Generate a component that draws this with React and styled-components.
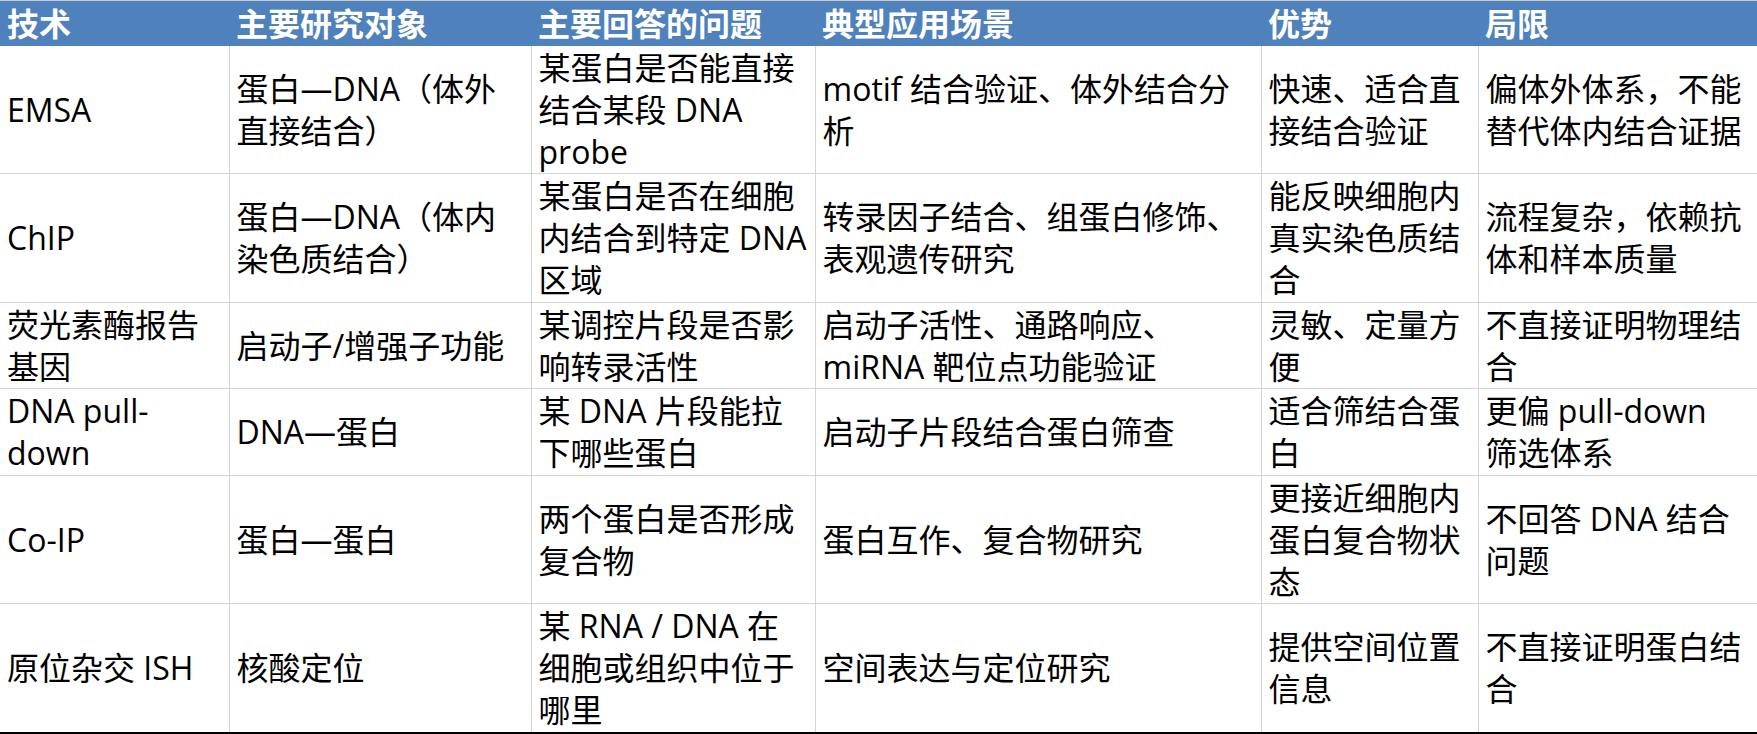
import React from "react";
import styled, { createGlobalStyle } from "styled-components";

const GlobalStyle = createGlobalStyle`
  html, body {
    margin: 0;
    padding: 0;
    background: #ffffff;
  }
  body {
    font-family: "Open Sans", "Noto Sans CJK SC", sans-serif;
  }
`;

const Table = styled.table`
  width: 1757px;
  border-collapse: collapse;
  table-layout: fixed;
  border-top: 1px solid #c9c9c9;
  border-bottom: 2px solid #000000;
  font-size: 32px;
  color: #000000;
`;

const HeadCell = styled.th`
  background: #4f81bd;
  color: #ffffff;
  font-weight: bold;
  text-align: left;
  height: 45px;
  padding: 0 7px;
  vertical-align: middle;
`;

const Row = styled.tr`
  & + & td {
    border-top: 1px solid #d4d4d4;
  }
`;

const Cell = styled.td`
  padding: 0 7px;
  height: ${(p) => p.$h}px;
  vertical-align: middle;
  overflow: hidden;
  border-left: ${(p) => (p.$first ? "none" : "1px solid #d4d4d4")};
`;

const Line = styled.div`
  height: 42px;
  line-height: 42px;
  white-space: pre;
`;

const widths = [229, 302, 284, 446, 217, 279];

const headers = ["技术", "主要研究对象", "主要回答的问题", "典型应用场景", "优势", "局限"];

const rows = [
  {
    h: 127,
    cells: [
      ["EMSA"],
      ["蛋白—DNA（体外", "直接结合）"],
      ["某蛋白是否能直接", "结合某段 DNA", "probe"],
      ["motif 结合验证、体外结合分", "析"],
      ["快速、适合直", "接结合验证"],
      ["偏体外体系，不能", "替代体内结合证据"],
    ],
  },
  {
    h: 128,
    cells: [
      ["ChIP"],
      ["蛋白—DNA（体内", "染色质结合）"],
      ["某蛋白是否在细胞", "内结合到特定 DNA", "区域"],
      ["转录因子结合、组蛋白修饰、", "表观遗传研究"],
      ["能反映细胞内", "真实染色质结", "合"],
      ["流程复杂，依赖抗", "体和样本质量"],
    ],
  },
  {
    h: 85,
    cells: [
      ["荧光素酶报告", "基因"],
      ["启动子/增强子功能"],
      ["某调控片段是否影", "响转录活性"],
      ["启动子活性、通路响应、", "miRNA 靶位点功能验证"],
      ["灵敏、定量方", "便"],
      ["不直接证明物理结", "合"],
    ],
  },
  {
    h: 86,
    cells: [
      ["DNA pull-", "down"],
      ["DNA—蛋白"],
      ["某 DNA 片段能拉", "下哪些蛋白"],
      ["启动子片段结合蛋白筛查"],
      ["适合筛结合蛋", "白"],
      ["更偏 pull-down", "筛选体系"],
    ],
  },
  {
    h: 127,
    cells: [
      ["Co-IP"],
      ["蛋白—蛋白"],
      ["两个蛋白是否形成", "复合物"],
      ["蛋白互作、复合物研究"],
      ["更接近细胞内", "蛋白复合物状", "态"],
      ["不回答 DNA 结合", "问题"],
    ],
  },
  {
    h: 128,
    cells: [
      ["原位杂交 ISH"],
      ["核酸定位"],
      ["某 RNA / DNA 在", "细胞或组织中位于", "哪里"],
      ["空间表达与定位研究"],
      ["提供空间位置", "信息"],
      ["不直接证明蛋白结", "合"],
    ],
  },
];

const App = () => {
  return (
    <>
      <GlobalStyle />
      <Table>
        <colgroup>
          {widths.map((w, i) => (
            <col key={i} style={{ width: w }} />
          ))}
        </colgroup>
        <thead>
          <tr>
            {headers.map((t) => (
              <HeadCell key={t}>
                <Line>{t}</Line>
              </HeadCell>
            ))}
          </tr>
        </thead>
        <tbody>
          {rows.map((r, i) => (
            <Row key={i}>
              {r.cells.map((lines, j) => (
                <Cell key={j} $h={r.h} $first={j === 0}>
                  {lines.map((l, k) => (
                    <Line key={k}>{l}</Line>
                  ))}
                </Cell>
              ))}
            </Row>
          ))}
        </tbody>
      </Table>
    </>
  );
};

export default App;
